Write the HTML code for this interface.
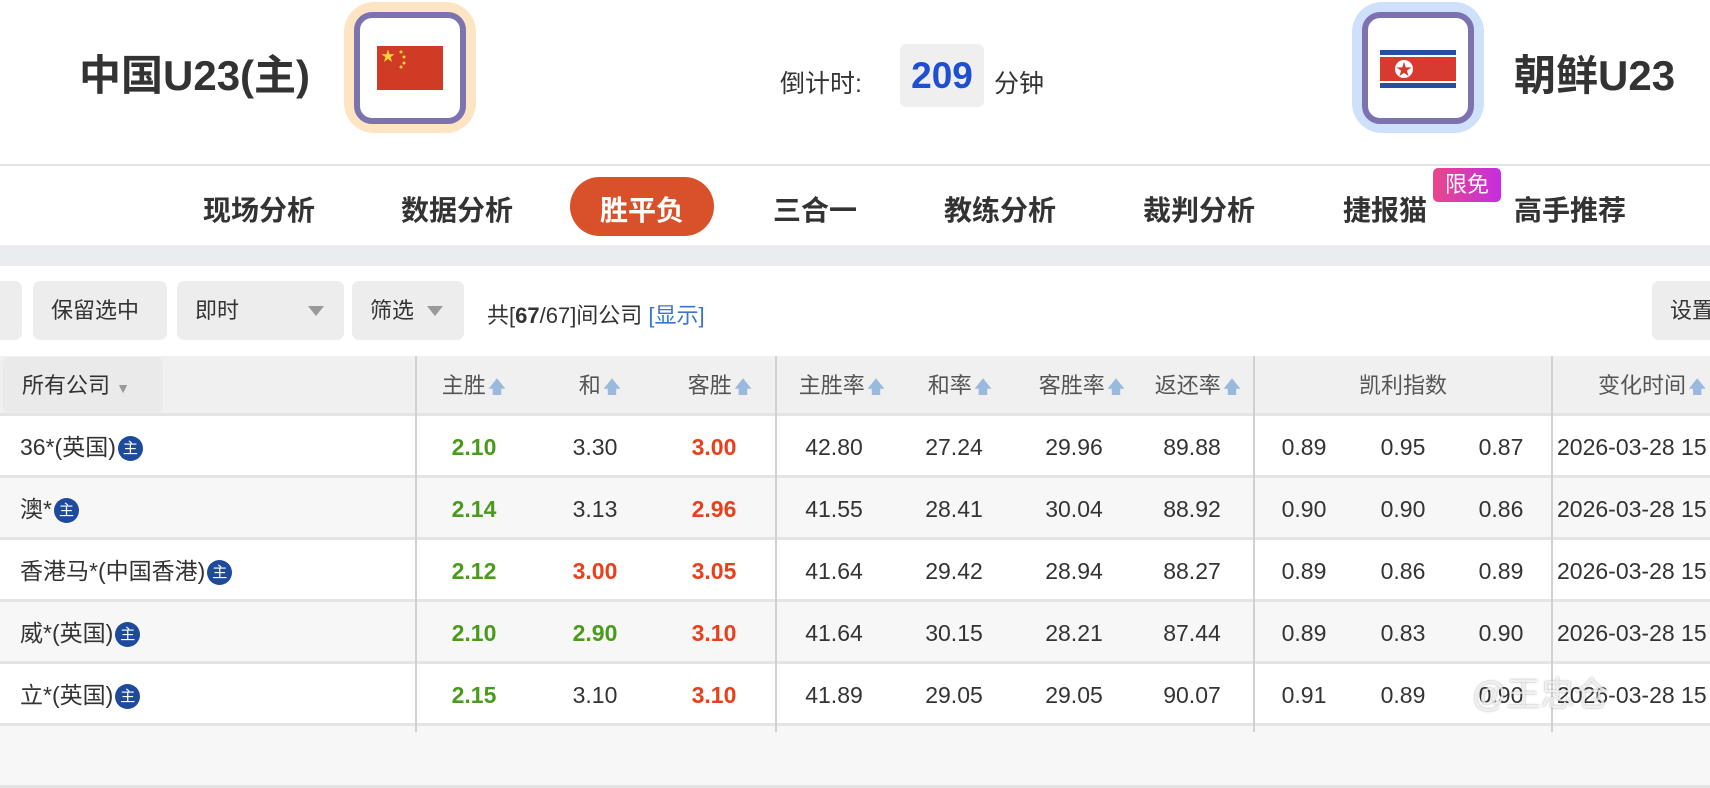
<!DOCTYPE html>
<html><head><meta charset="utf-8"><style>
*{margin:0;padding:0;box-sizing:border-box}
body{width:1710px;height:732px;overflow:hidden;background:#fff;font-family:"Liberation Sans","Noto Sans CJK SC",sans-serif;color:#333;position:relative}
.a{position:absolute;white-space:nowrap}
.team{font-size:42px;font-weight:bold;color:#333;top:42px}
.ring{position:absolute;width:132px;height:131px;border-radius:30px;top:2px}
.box{position:absolute;left:10px;top:10px;width:112px;height:112px;border:6px solid #7c72b0;border-radius:18px;background:#fff}
.nav{font-size:28px;font-weight:bold;color:#333;top:189px}
.btn{position:absolute;top:281px;height:59px;background:#ededed;border-radius:7px;font-size:22px;color:#333;line-height:59px;padding-left:18px;white-space:nowrap}
.tri{position:absolute;top:25px;width:0;height:0;border-left:8px solid transparent;border-right:8px solid transparent;border-top:10px solid #999}
.row{position:absolute;left:0;width:1710px;height:62px;border-bottom:3px solid #e4e4e4}
.c{position:absolute;font-size:23px;line-height:62px;transform:translateX(-50%);white-space:nowrap}
.g{color:#4a9a1c;font-weight:bold}.r{color:#e8401c;font-weight:bold}
.vl{position:absolute;width:2px;background:#d0d0d0;top:356px;height:376px}
.h{position:absolute;top:356px;line-height:60px;font-size:22px;color:#555;transform:translateX(-50%);white-space:nowrap}
.up{display:inline-block;color:#9bb9dd;font-size:18px;margin-left:2px}
.zhu{display:inline-block;width:25px;height:25px;border-radius:50%;background:#1e4a9c;color:#fff;font-size:15px;line-height:25px;text-align:center;vertical-align:2px;margin-left:2px}
.nm{position:absolute;left:20px;font-size:23px;line-height:62px;white-space:nowrap}
</style></head><body>
<div class="a team" style="left:79px">中国U23(主)</div>
<div class="ring" style="left:344px;background:#fde5c4"><div class="box">
<svg style="position:absolute;left:17px;top:28px" width="66" height="44" viewBox="0 0 66 44"><rect width="66" height="44" fill="#cf3b25"/><text x="4" y="15" fill="#f8d33a" font-size="14">★</text><circle cx="24" cy="6" r="1.5" fill="#f8d33a"/><circle cx="27" cy="11" r="1.5" fill="#f8d33a"/><circle cx="27" cy="17" r="1.5" fill="#f8d33a"/><circle cx="24" cy="21" r="1.5" fill="#f8d33a"/></svg>
</div></div>
<div class="a" style="left:780px;top:64px;font-size:25px;color:#333">倒计时:</div>
<div class="a" style="left:900px;top:44px;width:84px;height:63px;background:#efefef;border-radius:6px;text-align:center;line-height:63px;font-size:37px;font-weight:bold;color:#1e4fd0">209</div>
<div class="a" style="left:994px;top:64px;font-size:25px;color:#333">分钟</div>
<div class="ring" style="left:1352px;background:#cfe0fb"><div class="box">
<svg style="position:absolute;left:12px;top:32px" width="76" height="38" viewBox="0 0 76 38"><rect width="76" height="38" fill="#2350a0"/><rect y="5" width="76" height="28" fill="#fff"/><rect y="7" width="76" height="24" fill="#d93a30"/><circle cx="24" cy="19" r="9" fill="#fff"/><text x="24" y="25" fill="#d93a30" font-size="16" text-anchor="middle">★</text></svg>
</div></div>
<div class="a team" style="left:1514px">朝鲜U23</div>
<div class="a" style="left:0;top:164px;width:1710px;height:2px;background:#e3e3e3"></div>
<div class="a" style="left:570px;top:177px;width:144px;height:59px;border-radius:30px;background:#d9512a"></div>
<div class="a nav" style="left:203px">现场分析</div>
<div class="a nav" style="left:401px">数据分析</div>
<div class="a nav" style="left:600px;color:#fff">胜平负</div>
<div class="a nav" style="left:773px">三合一</div>
<div class="a nav" style="left:944px">教练分析</div>
<div class="a nav" style="left:1143px">裁判分析</div>
<div class="a nav" style="left:1343px">捷报猫</div>
<div class="a" style="left:1433px;top:168px;width:68px;height:34px;border-radius:5px;background:linear-gradient(90deg,#e8478a,#c42ee0);color:#fff;font-size:22px;line-height:34px;text-align:center">限免</div>
<div class="a nav" style="left:1514px">高手推荐</div>
<div class="a" style="left:0;top:245px;width:1710px;height:21px;background:#ebecf0"></div>
<div class="btn" style="left:-10px;width:32px"></div>
<div class="btn" style="left:33px;width:134px">保留选中</div>
<div class="btn" style="left:177px;width:167px">即时<span class="tri" style="left:131px"></span></div>
<div class="btn" style="left:352px;width:112px">筛选<span class="tri" style="left:75px"></span></div>
<div class="a" style="left:487px;top:298px;font-size:22px;color:#333">共[<b>67</b>/67]间公司 <span style="color:#3a75d0">[显示]</span></div>
<div class="btn" style="left:1652px;width:70px">设置</div>
<div class="a" style="left:0;top:356px;width:1710px;height:60px;background:#f0f0f0;border-bottom:3px solid #e4e4e4"></div>
<div class="a" style="left:3px;top:357px;width:160px;height:56px;background:#eaeaea;border-radius:6px"></div>
<div class="a" style="left:22px;top:356px;line-height:60px;font-size:22px;color:#333">所有公司 <span style="color:#999;font-size:14px">▼</span></div>
<div class="h" style="left:474px">主胜<span class="up">🡅</span></div>
<div class="h" style="left:600px">和<span class="up">🡅</span></div>
<div class="h" style="left:720px">客胜<span class="up">🡅</span></div>
<div class="h" style="left:842px">主胜率<span class="up">🡅</span></div>
<div class="h" style="left:960px">和率<span class="up">🡅</span></div>
<div class="h" style="left:1082px">客胜率<span class="up">🡅</span></div>
<div class="h" style="left:1198px">返还率<span class="up">🡅</span></div>
<div class="h" style="left:1403px">凯利指数</div>
<div class="a" style="left:1598px;top:356px;line-height:60px;font-size:22px;color:#555">变化时间<span class="up">🡅</span></div>

<div class="row" style="top:416px;background:#fff"></div>
<div class="row" style="top:478px;background:#f7f7f7"></div>
<div class="row" style="top:540px;background:#fff"></div>
<div class="row" style="top:602px;background:#f7f7f7"></div>
<div class="row" style="top:664px;background:#fff"></div>
<div class="row" style="top:726px;background:#f7f7f7"></div>

<div class="nm" style="top:416px">36*(英国)<span class="zhu">主</span></div>
<div class="nm" style="top:478px">澳*<span class="zhu">主</span></div>
<div class="nm" style="top:540px">香港马*(中国香港)<span class="zhu">主</span></div>
<div class="nm" style="top:602px">威*(英国)<span class="zhu">主</span></div>
<div class="nm" style="top:664px">立*(英国)<span class="zhu">主</span></div>

<div style="position:absolute;left:0;top:416px;width:1710px">
<div style="position:absolute;top:0;width:1710px;height:62px">
<span class="c g" style="left:474px">2.10</span><span class="c" style="left:595px">3.30</span><span class="c r" style="left:714px">3.00</span><span class="c" style="left:834px">42.80</span><span class="c" style="left:954px">27.24</span><span class="c" style="left:1074px">29.96</span><span class="c" style="left:1192px">89.88</span><span class="c" style="left:1304px">0.89</span><span class="c" style="left:1403px">0.95</span><span class="c" style="left:1501px">0.87</span><span class="c" style="left:1557px;transform:none">2026-03-28 15</span></div>
<div style="position:absolute;top:62px;width:1710px;height:62px">
<span class="c g" style="left:474px">2.14</span><span class="c" style="left:595px">3.13</span><span class="c r" style="left:714px">2.96</span><span class="c" style="left:834px">41.55</span><span class="c" style="left:954px">28.41</span><span class="c" style="left:1074px">30.04</span><span class="c" style="left:1192px">88.92</span><span class="c" style="left:1304px">0.90</span><span class="c" style="left:1403px">0.90</span><span class="c" style="left:1501px">0.86</span><span class="c" style="left:1557px;transform:none">2026-03-28 15</span></div>
<div style="position:absolute;top:124px;width:1710px;height:62px">
<span class="c g" style="left:474px">2.12</span><span class="c r" style="left:595px">3.00</span><span class="c r" style="left:714px">3.05</span><span class="c" style="left:834px">41.64</span><span class="c" style="left:954px">29.42</span><span class="c" style="left:1074px">28.94</span><span class="c" style="left:1192px">88.27</span><span class="c" style="left:1304px">0.89</span><span class="c" style="left:1403px">0.86</span><span class="c" style="left:1501px">0.89</span><span class="c" style="left:1557px;transform:none">2026-03-28 15</span></div>
<div style="position:absolute;top:186px;width:1710px;height:62px">
<span class="c g" style="left:474px">2.10</span><span class="c g" style="left:595px">2.90</span><span class="c r" style="left:714px">3.10</span><span class="c" style="left:834px">41.64</span><span class="c" style="left:954px">30.15</span><span class="c" style="left:1074px">28.21</span><span class="c" style="left:1192px">87.44</span><span class="c" style="left:1304px">0.89</span><span class="c" style="left:1403px">0.83</span><span class="c" style="left:1501px">0.90</span><span class="c" style="left:1557px;transform:none">2026-03-28 15</span></div>
<div style="position:absolute;top:248px;width:1710px;height:62px">
<span class="c g" style="left:474px">2.15</span><span class="c" style="left:595px">3.10</span><span class="c r" style="left:714px">3.10</span><span class="c" style="left:834px">41.89</span><span class="c" style="left:954px">29.05</span><span class="c" style="left:1074px">29.05</span><span class="c" style="left:1192px">90.07</span><span class="c" style="left:1304px">0.91</span><span class="c" style="left:1403px">0.89</span><span class="c" style="left:1501px">0.90</span><span class="c" style="left:1557px;transform:none">2026-03-28 15</span></div>
</div>
<div class="vl" style="left:415px"></div>
<div class="vl" style="left:775px"></div>
<div class="vl" style="left:1253px"></div>
<div class="vl" style="left:1551px"></div>
<div class="a" style="left:1472px;top:667px;font-size:34px;color:rgba(255,255,255,0.75);text-shadow:0 0 2px rgba(0,0,0,0.35)">@王忠仓</div>
</body></html>
